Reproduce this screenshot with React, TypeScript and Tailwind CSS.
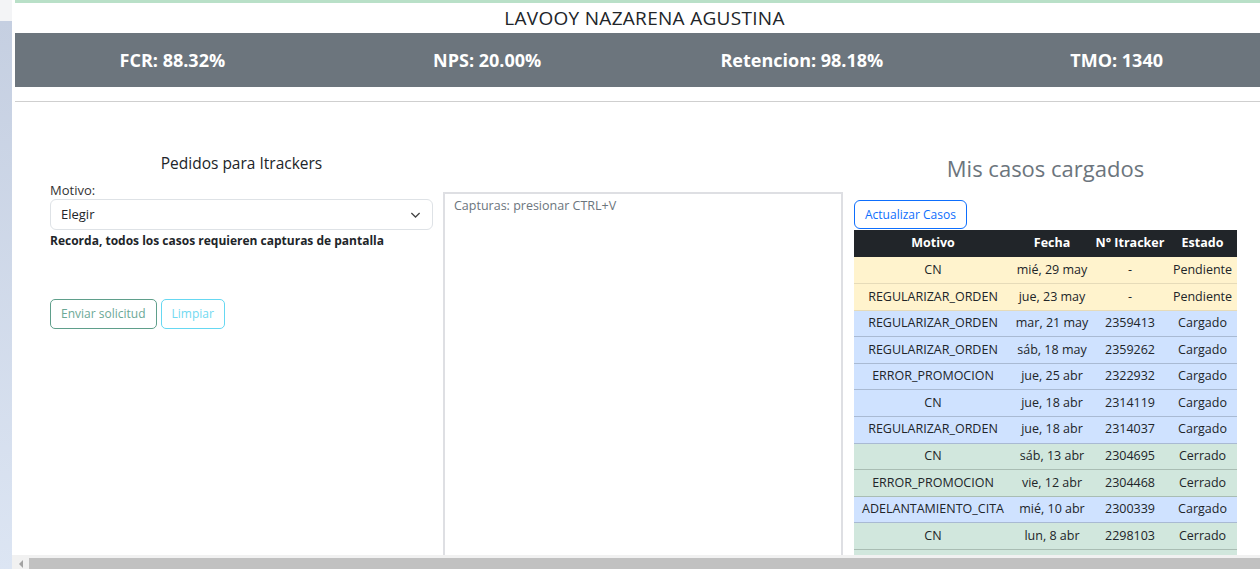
import React from "react";

type Caso = {
  motivo: string;
  fecha: string;
  itracker: string;
  estado: string;
  color: "warning" | "primary" | "success";
};

const casos: Caso[] = [
  { motivo: "CN", fecha: "mié, 29 may", itracker: "-", estado: "Pendiente", color: "warning" },
  { motivo: "REGULARIZAR_ORDEN", fecha: "jue, 23 may", itracker: "-", estado: "Pendiente", color: "warning" },
  { motivo: "REGULARIZAR_ORDEN", fecha: "mar, 21 may", itracker: "2359413", estado: "Cargado", color: "primary" },
  { motivo: "REGULARIZAR_ORDEN", fecha: "sáb, 18 may", itracker: "2359262", estado: "Cargado", color: "primary" },
  { motivo: "ERROR_PROMOCION", fecha: "jue, 25 abr", itracker: "2322932", estado: "Cargado", color: "primary" },
  { motivo: "CN", fecha: "jue, 18 abr", itracker: "2314119", estado: "Cargado", color: "primary" },
  { motivo: "REGULARIZAR_ORDEN", fecha: "jue, 18 abr", itracker: "2314037", estado: "Cargado", color: "primary" },
  { motivo: "CN", fecha: "sáb, 13 abr", itracker: "2304695", estado: "Cerrado", color: "success" },
  { motivo: "ERROR_PROMOCION", fecha: "vie, 12 abr", itracker: "2304468", estado: "Cerrado", color: "success" },
  { motivo: "ADELANTAMIENTO_CITA", fecha: "mié, 10 abr", itracker: "2300339", estado: "Cargado", color: "primary" },
  { motivo: "CN", fecha: "lun, 8 abr", itracker: "2298103", estado: "Cerrado", color: "success" },
  // la fila siguiente queda tapada por la barra de scroll
  { motivo: "", fecha: "", itracker: "", estado: "", color: "success" },
];

// colores de fila (bootstrap table-warning / primary / success)
const rowClass = {
  warning: "bg-[#fff3cd] border-[#e6dbb9]",
  primary: "bg-[#cfe2ff] border-[#a9bad3]",
  success: "bg-[#d1e7dd] border-[#a9bdb3]",
};

const metricas = ["FCR: 88.32%", "NPS: 20.00%", "Retencion: 98.18%", "TMO: 1340"];

export default function App() {
  return (
    <div className="flex h-[569px] w-[1260px] overflow-hidden bg-white font-['Open_Sans','Noto_Sans',sans-serif] text-[#212529]">
      {/* franja lateral */}
      <div className="flex w-[12px] shrink-0 flex-col">
        <div className="h-[21px] bg-[#f3f4f6]" />
        <div className="flex-1 bg-gradient-to-b from-[#c5cfe1] to-[#dce5f3]" />
      </div>

      <div className="flex min-w-0 flex-1 flex-col">
        <div className="min-h-0 flex-1 overflow-hidden">
          <div className="w-[1265px] px-[3px]">
            <div className="h-[3px] bg-[#b9e0c8]" />
            <h1 className="flex h-[30px] items-center justify-center text-[19px] font-medium tracking-[0.3px] text-[#212529]">
              LAVOOY NAZARENA AGUSTINA
            </h1>
            <div className="grid h-[54px] grid-cols-4 items-center bg-[#6c757d] text-[18px] font-bold text-white">
              {metricas.map((m) => (
                <div key={m} className="text-center">
                  {m}
                </div>
              ))}
            </div>
            <hr className="mt-[14px] border-t border-[#cfcfcf]" />

            <div className="flex pl-[35px]">
              {/* formulario */}
              <div className="w-[383px] pt-[50px]">
                <h4 className="text-center text-[15.5px] font-medium">Pedidos para Itrackers</h4>
                <label className="mt-[7px] block text-[13px] leading-[16px] text-[#333]">Motivo:</label>
                <div className="mt-[1px] flex h-[31px] items-center justify-between rounded-[6px] border border-[#dee2e6] pl-[10px] pr-[11px] text-[13px]">
                  <span>Elegir</span>
                  <svg width="11" height="8" viewBox="0 0 12 8" fill="none" stroke="#444" strokeWidth="1.4">
                    <path d="M1.5 1.8 6 6.2 10.5 1.8" />
                  </svg>
                </div>
                <p className="mt-[2px] text-[12px] font-bold">Recorda, todos los casos requieren capturas de pantalla</p>
                <div className="mt-[49px] flex gap-[4px]">
                  <button className="h-[30px] rounded-[5px] border border-[#5f9f8b] px-[10px] text-[12px] text-[#6ba896]">
                    Enviar solicitud
                  </button>
                  <button className="h-[30px] rounded-[5px] border border-[#66d8f2] px-[10px] text-[12px] text-[#71d9f1]">
                    Limpiar
                  </button>
                </div>
              </div>

              {/* capturas */}
              <div className="ml-[10px] mt-[90px] h-[400px] w-[400px] border-2 border-b-0 border-[#dedfe3] px-[9px] pt-[3px] text-[12.5px] text-[#6c757d]">
                Capturas: presionar CTRL+V
              </div>

              {/* casos */}
              <div className="ml-[11px] w-[383px] pt-[50px]">
                <h2 className="text-center text-[22px] font-medium text-[#6c757d]">Mis casos cargados</h2>
                <button className="mt-[15px] h-[29px] rounded-[6px] border border-[#0d6efd] px-[10px] text-[12px] text-[#0d6efd]">
                  Actualizar Casos
                </button>
                <table className="mt-[1px] w-full table-fixed border-collapse text-center text-[12.5px]">
                  <colgroup>
                    <col className="w-[158px]" />
                    <col className="w-[80px]" />
                    <col className="w-[76px]" />
                    <col className="w-[69px]" />
                  </colgroup>
                  <thead>
                    <tr className="h-[27px] bg-[#212529] font-bold text-white">
                      <th>Motivo</th>
                      <th>Fecha</th>
                      <th>N° Itracker</th>
                      <th>Estado</th>
                    </tr>
                  </thead>
                  <tbody>
                    {casos.map((c, i) => (
                      <tr key={i} className={`h-[26.6px] border-b ${rowClass[c.color]}`}>
                        <td className="whitespace-nowrap">{c.motivo}</td>
                        <td className="whitespace-nowrap">{c.fecha}</td>
                        <td>{c.itracker}</td>
                        <td>{c.estado}</td>
                      </tr>
                    ))}
                  </tbody>
                </table>
              </div>
            </div>
          </div>
        </div>

        {/* barra de scroll horizontal */}
        <div className="flex h-[14px] shrink-0 items-end bg-[#f1f1f1]">
          <div className="flex h-[11px] w-[17px] items-center justify-center">
            <div className="h-0 w-0 border-y-[4px] border-r-[4px] border-y-transparent border-r-[#a3a3a3]" />
          </div>
          <div className="h-[11px] flex-1 bg-[#c1c1c1]" />
        </div>
      </div>
    </div>
  );
}
